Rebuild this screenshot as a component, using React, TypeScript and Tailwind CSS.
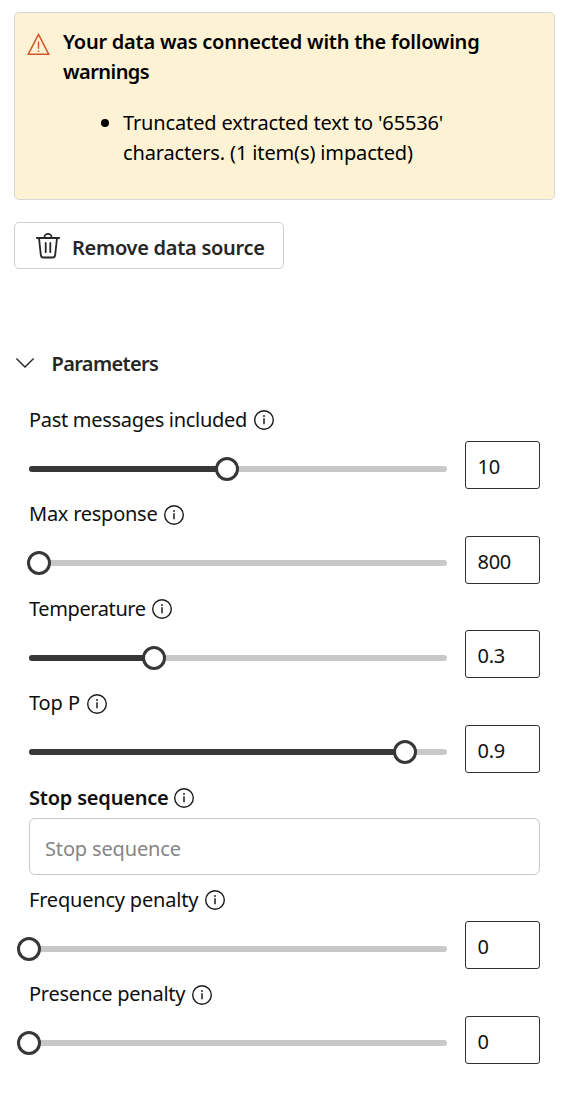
import React from "react";

function InfoIcon() {
  return (
    <svg width="20" height="20" viewBox="0 0 20 20" fill="none" stroke="#1b1b1b" className="mt-[5px] shrink-0">
      <circle cx="10" cy="10" r="9.3" strokeWidth="1.4" />
      <path d="M10 8.2V14.2" strokeWidth="1.5" />
      <circle cx="10" cy="6" r="0.95" fill="#1b1b1b" stroke="none" />
    </svg>
  );
}

function Label({ text, className }: { text: string; className: string }) {
  return (
    <div className="flex h-[30px] items-start leading-[29.4px] text-[#0f0f0f]">
      <span className={`shrink-0 whitespace-nowrap ${className}`}>{text}</span>
      <InfoIcon />
    </div>
  );
}

type ParamProps = { text: string; className: string; offset: number; value: string };

function Param({ text, className, offset, value }: ParamProps) {
  return (
    <div className="h-[94.5px]">
      <Label text={text} className={className} />
      <div className="mt-1.5 flex h-12 items-start">
        <div className="relative mt-[24.75px] h-1.5 w-[418px] rounded-full bg-[#c8c8c8]">
          <div className="h-1.5 rounded-full bg-[#373737]" style={{ width: offset }} />
          <div
            className="absolute top-[-9px] h-6 w-6 -translate-x-1/2 rounded-full border-3 border-[#373737] bg-white"
            style={{ left: offset }}
          />
        </div>
        <div className="ml-[18px] h-12 w-[75px] rounded-[3px] border border-[#323130] pl-[11.5px] leading-[49px] tracking-[-0.3px] text-[#111]">
          {value}
        </div>
      </div>
    </div>
  );
}

export default function App() {
  return (
    <main className="h-[1109px] w-[569px] overflow-hidden bg-white pl-3.5 pt-3 font-['Noto_Sans','Open_Sans',sans-serif] text-[20px] text-black">
      <section className="flex h-[188px] w-[541px] rounded-[5px] border border-[#d6d6d6] bg-[#fdf3d4] pl-3 pt-3.5">
        <svg width="23" height="24" viewBox="0 0 23 24" fill="none" stroke="#d2562a" className="mt-[5px] shrink-0">
          <path d="M11.5 2.4L21.8 22.3H1.2Z" strokeWidth="1.5" />
          <path d="M11.5 9.6V16.8M11.5 18.4V20" strokeWidth="1.4" />
        </svg>
        <div className="ml-[13px] leading-[30px]">
          <h2 className="whitespace-nowrap font-[580] tracking-[-0.24px]">
            Your data was connected with the following
            <br />
            <span className="tracking-[-0.55px]">warnings</span>
          </h2>
          <ul className="mt-[21px] flex pl-[38px] tracking-[-0.14px]">
            <li className="flex whitespace-nowrap">
              <span className="mr-3.5 mt-[11px] h-2 w-2 rounded-full bg-black" />
              <span>
                Truncated extracted text to '65536'
                <br />
                characters. (1 item(s) impacted)
              </span>
            </li>
          </ul>
        </div>
      </section>

      <button className="mt-[22px] flex h-[47px] w-[270px] items-start rounded-[5px] border border-[#cfcfcf] pl-5 font-[580] tracking-[-0.28px] text-[#262626]">
        <svg width="26" height="28" viewBox="0 0 26 28" fill="none" stroke="#262626" strokeWidth="1.8" strokeLinecap="round" className="mt-[9px] shrink-0">
          <path d="M1.9 6H24.1M9.5 6V5.2A3.5 3.3 0 0 1 16.5 5.2V6" />
          <path d="M4 6L5.8 22.8A3 3 0 0 0 8.8 25.5H17.2A3 3 0 0 0 20.2 22.8L22 6" />
          <path d="M10.7 11V20.2M15.3 11V20.2" />
        </svg>
        <span className="ml-[11px] whitespace-nowrap leading-[49px]">Remove data source</span>
      </button>

      <div className="mt-20 flex h-[30px] items-start font-[580] leading-[30px] tracking-[-0.65px] text-[#262626]">
        <svg width="22" height="14" viewBox="0 0 22 14" fill="none" stroke="#262626" strokeWidth="1.4" className="mt-[7px] shrink-0">
          <path d="M2.4 2.4L11 11L19.6 2.4" />
        </svg>
        <span className="ml-[15.5px]">Parameters</span>
      </div>

      <div className="ml-[15px] mt-[26px]">
        <Param text="Past messages included" className="w-[225px] tracking-[-0.3px]" offset={198} value="10" />
        <Param text="Max response" className="-mt-px w-[135px] tracking-[-0.25px]" offset={10} value="800" />
        <Param text="Temperature" className="w-[123px] tracking-[-0.4px]" offset={125} value="0.3" />
        <Param text="Top P" className="-mt-px w-[58px] tracking-[-0.1px]" offset={376} value="0.9" />
        <div className="h-[102px]">
          <Label text="Stop sequence" className="w-[145px] font-[580] tracking-[-0.2px]" />
          <div className="mt-[5px] h-[57px] w-[511px] rounded-[6px] border border-[#c8c8c8] pl-[15px] leading-[59px] tracking-[-0.15px] text-[#858585]">
            Stop sequence
          </div>
        </div>
        <Param text="Frequency penalty" className="w-[176px] tracking-[-0.2px]" offset={0} value="0" />
        <Param text="Presence penalty" className="-mt-px w-[163px] tracking-[-0.25px]" offset={0} value="0" />
      </div>
    </main>
  );
}
